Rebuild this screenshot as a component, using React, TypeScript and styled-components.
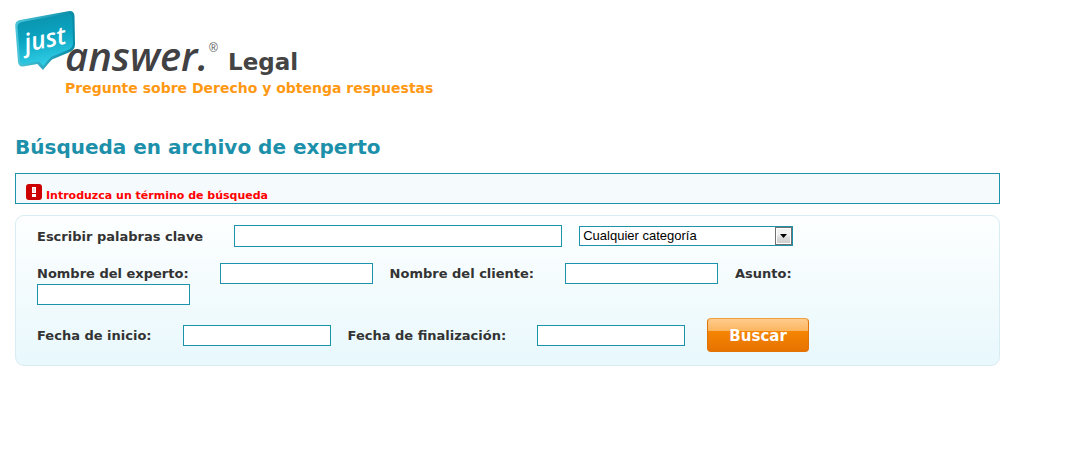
import React from "react";
import styled, { createGlobalStyle } from "styled-components";

const GlobalStyle = createGlobalStyle`
  *, *::before, *::after { box-sizing: border-box; }
  body {
    margin: 0;
    background: #fff;
    color: #333;
    font-family: Verdana, "DejaVu Sans", sans-serif;
    font-size: 13px;
  }
`;

const Page = styled.div`
  max-width: 1015px;
  padding: 10px 15px;
`;

const Header = styled.header`
  display: grid;
  grid-template-columns: 204px 1fr;
  column-gap: 9px;
`;

const LogoLink = styled.a`
  display: block;
  height: 66px;
`;

const Logo = styled.svg`
  display: block;
  overflow: visible;
`;

const Section = styled.span`
  align-self: end;
  padding-bottom: 1px;
  color: #444;
  font-size: 23px;
  font-weight: bold;
  line-height: 26px;
`;

const Tagline = styled.p`
  grid-column: 1 / -1;
  margin: 3px 0 0 50px;
  color: #ff9914;
  font-size: 14px;
  font-weight: bold;
  line-height: 18px;
`;

const Title = styled.h1`
  margin: 37px 0 0;
  color: #1c90aa;
  font-size: 20px;
  line-height: 26px;
`;

const Alert = styled.div`
  display: flex;
  align-items: flex-start;
  gap: 4px;
  height: 31px;
  margin-top: 13px;
  padding: 10px;
  border: 1px solid #1c93ab;
  background: #f5fafd;
  color: #f00;
  font-size: 11px;
  font-weight: bold;
  line-height: 24px;
`;

const AlertIcon = styled.svg`
  flex: none;
`;

const SearchForm = styled.form`
  display: flex;
  flex-direction: column;
  margin-top: 11px;
  padding: 9px 60px 13px 21px;
  border: 1px solid #d9ecf2;
  border-radius: 9px;
  background: linear-gradient(#fdffff, #f3fbfd 50%, #e8f8fd);
`;

const Row = styled.div<{ $space?: number }>`
  display: flex;
  flex-wrap: wrap;
  align-items: center;
  margin-top: ${(p) => p.$space ?? 0}px;
`;

const Label = styled.label`
  margin-right: 31px;
  font-weight: bold;
  line-height: 21px;
`;

const TextInput = styled.input<{ $width: number; $tall?: boolean }>`
  width: ${(p) => p.$width}px;
  height: ${(p) => (p.$tall ? 22 : 21)}px;
  margin: 0 17px 0 0;
  padding: 1px 3px;
  border: 1px solid #1c93ab;
  border-radius: 0;
  background: #fff;
  font: 13px "Liberation Sans", Arial, sans-serif;
`;

const SelectBox = styled.div`
  display: grid;
  width: 214px;
  height: 20px;
`;

const Select = styled.select`
  grid-area: 1 / 1;
  width: 100%;
  padding: 0 20px 0 3px;
  border: 1px solid #1c93ab;
  border-radius: 0;
  background: #fff;
  color: #000;
  appearance: none;
  font: 13px/18px "Liberation Sans", Arial, sans-serif;
`;

const SelectArrow = styled.svg`
  grid-area: 1 / 1;
  place-self: center end;
  margin-right: 1px;
  pointer-events: none;
`;

const SubmitButton = styled.button`
  width: 102px;
  height: 34px;
  margin-left: 5px;
  padding: 1px 0 0;
  border: 1px solid #e27306;
  border-top-color: #f0a040;
  border-radius: 4px;
  background: linear-gradient(#ffcb8c, #fbb55f 38%, #f58503 39%, #e67300);
  color: #fff;
  cursor: pointer;
  font: bold 15px Verdana, "DejaVu Sans", sans-serif;
`;

function JustAnswerLogo() {
  return (
    <Logo width="204" height="66" viewBox="0 0 204 66" role="img" aria-label="JustAnswer">
      <defs>
        <linearGradient id="bubble" x1="0" y1="0" x2="0.2" y2="1">
          <stop offset="0" stopColor="#0b8fa9" />
          <stop offset="0.5" stopColor="#0aa3c0" />
          <stop offset="1" stopColor="#2fcbe4" />
        </linearGradient>
        <linearGradient id="edge" x1="0" y1="0" x2="1" y2="0">
          <stop offset="0" stopColor="#4cc6da" />
          <stop offset="1" stopColor="#078aa5" />
        </linearGradient>
      </defs>
      <path
        d="M5 10 53 1.200Q59 0 59.500 6L60 34Q60 39.500 55 42L37 49.500Q31 56 28 60Q25 57 22.500 54L8 56.500Q4 57 3 52L.2 16Q0 11 5 10Z"
        fill="url(#edge)"
      />
      <path
        d="M7 12 53 3.500Q57 3 57.300 7L58 33Q58 37.500 54 39.500L36 47Q31 52 28.500 56Q26 54 24 51.500L9 54Q6 54.500 5.200 51L2.500 17Q2.500 13 7 12Z"
        fill="url(#bubble)"
      />
      <text
        x="11"
        y="42"
        transform="rotate(-12 11 42)"
        fill="#fff"
        fontFamily="'Open Sans', sans-serif"
        fontSize="25"
        fontStyle="italic"
        fontWeight="600"
      >
        just
      </text>
      <text
        x="50"
        y="61"
        fill="#414042"
        fontFamily="'Open Sans', sans-serif"
        fontSize="40"
        fontStyle="italic"
        fontWeight="600"
      >
        answer.
      </text>
      <text x="194" y="42" fill="#58585a" fontFamily="'Liberation Sans', sans-serif" fontSize="12">
        ®
      </text>
    </Logo>
  );
}

export default function App() {
  return (
    <>
      <GlobalStyle />
      <Page>
        <Header>
          <LogoLink href="#">
            <JustAnswerLogo />
          </LogoLink>
          <Section>Legal</Section>
          <Tagline>Pregunte sobre Derecho y obtenga respuestas</Tagline>
        </Header>
        <main>
          <Title>Búsqueda en archivo de experto</Title>
          <Alert role="alert">
            <AlertIcon width="16" height="16" viewBox="0 0 16 16" aria-hidden="true">
              <rect width="16" height="16" rx="3" fill="#c00" />
              <path d="M6 3H10V9H6ZM6 10H10V13H6Z" fill="#fff" />
              <path d="M7.500 4H8.500V8H7.500Z" fill="#f3b5b5" />
            </AlertIcon>
            <span>Introduzca un término de búsqueda</span>
          </Alert>
          <SearchForm onSubmit={(e) => e.preventDefault()}>
            <Row>
              <Label htmlFor="keywords">Escribir palabras clave</Label>
              <TextInput id="keywords" $width={328} $tall />
              <SelectBox>
                <Select aria-label="Categoría" defaultValue="any">
                  <option value="any">Cualquier categoría</option>
                </Select>
                <SelectArrow width="17" height="18" viewBox="0 0 17 18" aria-hidden="true">
                  <defs>
                    <linearGradient id="arrow" x1="0" y1="0" x2="0" y2="1">
                      <stop offset="0.4" stopColor="#f2f2f2" />
                      <stop offset="0.6" stopColor="#dcdcdc" />
                      <stop offset="1" stopColor="#cfcfcf" />
                    </linearGradient>
                  </defs>
                  <rect x="0.500" y="0.500" width="16" height="17" fill="#fff" stroke="#707070" />
                  <rect x="2" y="2" width="13" height="14" fill="url(#arrow)" />
                  <path d="M5 7H12L8.500 11Z" fill="#000" />
                </SelectArrow>
              </SelectBox>
            </Row>
            <Row $space={16}>
              <Label htmlFor="expert">Nombre del experto:</Label>
              <TextInput id="expert" $width={153} />
              <Label htmlFor="client">Nombre del cliente:</Label>
              <TextInput id="client" $width={153} />
              <Label htmlFor="subject">Asunto:</Label>
              <TextInput id="subject" $width={153} />
            </Row>
            <Row $space={13}>
              <Label htmlFor="start">Fecha de inicio:</Label>
              <TextInput id="start" $width={148} />
              <Label htmlFor="end">Fecha de finalización:</Label>
              <TextInput id="end" $width={148} />
              <SubmitButton type="submit">Buscar</SubmitButton>
            </Row>
          </SearchForm>
        </main>
      </Page>
    </>
  );
}
